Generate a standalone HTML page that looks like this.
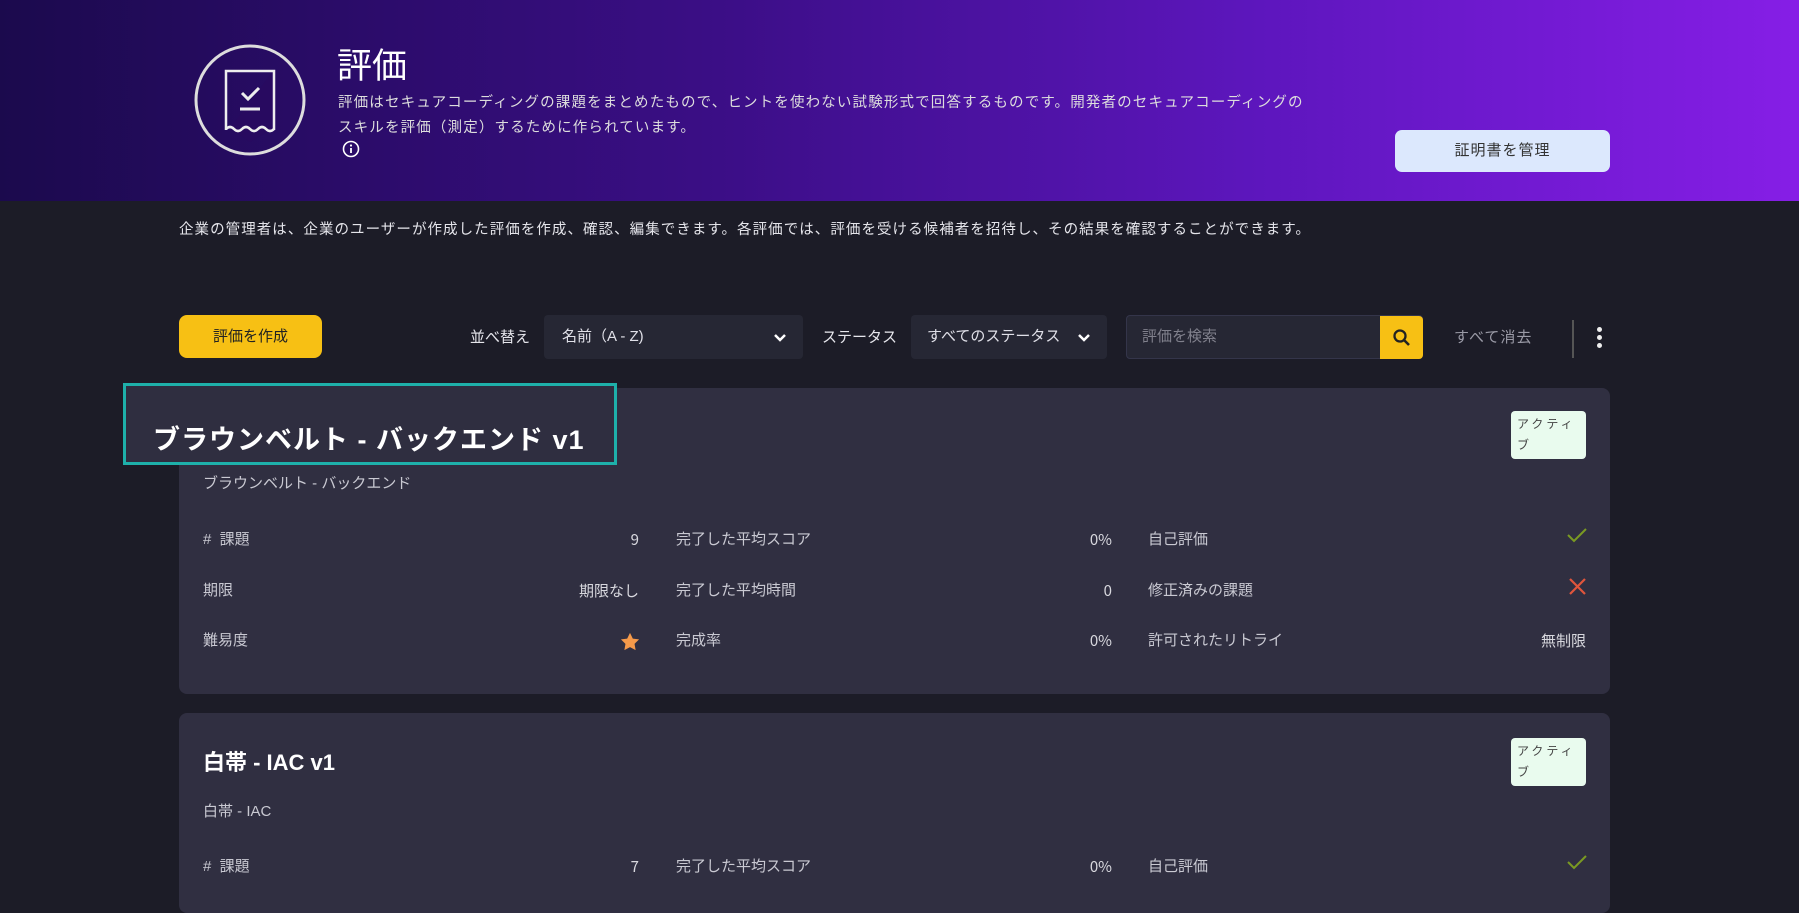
<!DOCTYPE html>
<html><head><meta charset="utf-8">
<style>
*{margin:0;padding:0;box-sizing:border-box}
body{width:1799px;height:887px;overflow:hidden;background:#1c1c27;font-family:"Liberation Sans","Noto Sans CJK JP",sans-serif;color:#e6e6ec;position:relative}
.a{position:absolute;white-space:nowrap}
.hdr{position:absolute;left:0;top:0;width:1799px;height:201px;background:linear-gradient(90deg,#1b0a4d 0%,#3b0e86 40%,#5d16bd 70%,#861ee6 100%)}
.card{position:absolute;left:179px;width:1431px;background:#302f41;border-radius:8px}
.lbl{font-size:15px;color:#c9c9d2;line-height:22px}
.val{font-size:15px;color:#d8d8de;text-align:right;line-height:22px;font-family:"Noto Sans CJK JP",sans-serif}
.badge{position:absolute;left:1332px;width:75px;height:48px;background:#e9fbee;border-radius:4px;font-size:12px;color:#444;padding:3px 6px;line-height:21px;white-space:normal;letter-spacing:3px;word-break:break-all}
.sel{position:absolute;top:315px;height:44px;background:#262734;border-radius:4px;font-size:15px;color:#e0e0e8;padding:0 18px;line-height:44px}
</style></head><body>
<div class="hdr"></div>
<svg class="a" style="left:190px;top:40px" width="120" height="120" viewBox="0 0 120 120">
<circle cx="60" cy="60" r="54" fill="none" stroke="#ddd" stroke-width="3"/>
<path d="M84 30 L84 88 L60 102 L40 88Z" fill="#2a0a60" opacity="0.7"/>
<path d="M36 90 V31 H84 V90" fill="none" stroke="#eee" stroke-width="2.5"/>
<path d="M36 89 q4 -4 8 0 t8 0 t8 0 t8 0 t8 0 t8 0" fill="none" stroke="#eee" stroke-width="2.5"/>
<path d="M52 53 l6 6 l11 -11" fill="none" stroke="#eee" stroke-width="3"/>
<path d="M50 69 H70" stroke="#eee" stroke-width="3"/>
</svg>
<div class="a" style="left:337px;top:38px;font-size:35px;color:#fff">評価</div>
<div class="a" style="left:338px;top:91px;font-size:14.5px;letter-spacing:1.15px;color:#ddd;line-height:25px">評価はセキュアコーディングの課題をまとめたもので、ヒントを使わない試験形式で回答するものです。開発者のセキュアコーディングの<br>スキルを評価（測定）するために作られています。</div>
<svg class="a" style="left:342px;top:140px" width="18" height="18" viewBox="0 0 18 18"><circle cx="9" cy="9" r="7.5" fill="none" stroke="#fff" stroke-width="1.6"/><path d="M9 8v5" stroke="#fff" stroke-width="1.8"/><circle cx="9" cy="5.5" r="1.1" fill="#fff"/></svg>
<div class="a" style="left:1395px;top:130px;width:215px;height:42px;background:#dce8fd;border-radius:7px;color:#333;font-size:15px;text-align:center;line-height:42px;letter-spacing:1px">証明書を管理</div>
<div class="a" style="left:179px;top:218px;font-size:14.5px;letter-spacing:1.05px;color:#e4e4ea">企業の管理者は、企業のユーザーが作成した評価を作成、確認、編集できます。各評価では、評価を受ける候補者を招待し、その結果を確認することができます。</div>
<div class="a" style="left:179px;top:315px;width:143px;height:43px;background:#f7c014;border-radius:8px;color:#222;font-size:15px;text-align:center;line-height:43px">評価を作成</div>
<div class="a" style="left:470px;top:326px;font-size:15px">並べ替え</div>
<div class="sel" style="left:544px;width:259px">名前（A - Z)</div>
<div class="a" style="left:822px;top:326px;font-size:15px">ステータス</div>
<div class="sel" style="left:911px;width:196px;padding-left:16px">すべてのステータス</div>
<svg class="a" style="left:1077px;top:332px" width="14" height="12" viewBox="0 0 14 12"><path d="M2 3l5 5 5-5" fill="none" stroke="#fff" stroke-width="2.5"/></svg>
<svg class="a" style="left:773px;top:332px" width="14" height="12" viewBox="0 0 14 12"><path d="M2 3l5 5 5-5" fill="none" stroke="#fff" stroke-width="2.5"/></svg>
<div class="a" style="left:1126px;top:315px;width:297px;height:44px;background:#262734;border:1px solid #34354a;border-radius:4px;font-size:15px;color:#80808c;line-height:42px;padding-left:15px">評価を検索</div>
<div class="a" style="left:1380px;top:316px;width:43px;height:43px;background:#f7c014;border-radius:0 4px 4px 0"></div>
<svg class="a" style="left:1391px;top:327px" width="22" height="22" viewBox="0 0 22 22"><circle cx="9" cy="9" r="5.5" fill="none" stroke="#222" stroke-width="2.3"/><path d="M13 13l5 5" stroke="#222" stroke-width="2.6"/></svg>
<div class="a" style="left:1454px;top:326px;font-size:15px;color:#9a9aa6;letter-spacing:1px">すべて消去</div>
<div class="a" style="left:1572px;top:320px;width:2px;height:38px;background:#555"></div>
<div class="a" style="left:1597px;top:327px;width:5px;height:5px;border-radius:50%;background:#eee"></div>
<div class="a" style="left:1597px;top:335px;width:5px;height:5px;border-radius:50%;background:#eee"></div>
<div class="a" style="left:1597px;top:343px;width:5px;height:5px;border-radius:50%;background:#eee"></div>

<div class="card" style="top:388px;height:306px"></div>
<div class="a" style="left:123px;top:383px;width:494px;height:82px;border:3px solid #1eb0aa;background:#2f2e40"></div>
<div class="a" style="left:153px;top:418px;font-size:27px;letter-spacing:1px;font-weight:bold;color:#fff">ブラウンベルト - バックエンド v1</div>
<div class="badge" style="top:411px;left:1511px">アクティブ</div>
<div class="a lbl" style="left:203px;top:473px">ブラウンベルト - バックエンド</div>

<div class="a lbl" style="left:203px;top:529px"># &nbsp;課題</div>
<div class="a val" style="left:539px;width:100px;top:529px">9</div>
<div class="a lbl" style="left:676px;top:529px">完了した平均スコア</div>
<div class="a val" style="left:1012px;width:100px;top:529px">0%</div>
<div class="a lbl" style="left:1148px;top:529px">自己評価</div>
<svg class="a" style="left:1566px;top:526px" width="22" height="18" viewBox="0 0 22 18"><path d="M2 9l6 6L20 3" fill="none" stroke="#7a9a22" stroke-width="2"/></svg>

<div class="a lbl" style="left:203px;top:580px">期限</div>
<div class="a val" style="left:539px;width:100px;top:580px">期限なし</div>
<div class="a lbl" style="left:676px;top:580px">完了した平均時間</div>
<div class="a val" style="left:1012px;width:100px;top:580px">0</div>
<div class="a lbl" style="left:1148px;top:580px">修正済みの課題</div>
<svg class="a" style="left:1568px;top:577px" width="19" height="19" viewBox="0 0 19 19"><path d="M2 2l15 15M17 2L2 17" stroke="#e0553c" stroke-width="2.2"/></svg>

<div class="a lbl" style="left:203px;top:630px">難易度</div>
<svg class="a" style="left:620px;top:632px" width="20" height="19" viewBox="0 0 24 23"><path d="M12 1l3.4 7 7.6 1-5.5 5.3 1.3 7.6L12 18.3 5.2 21.9l1.3-7.6L1 9l7.6-1z" fill="#f59a4a"/></svg>
<div class="a lbl" style="left:676px;top:630px">完成率</div>
<div class="a val" style="left:1012px;width:100px;top:630px">0%</div>
<div class="a lbl" style="left:1148px;top:630px">許可されたリトライ</div>
<div class="a val" style="left:1486px;width:100px;top:630px">無制限</div>

<div class="card" style="top:713px;height:200px"></div>
<div class="a" style="left:203px;top:745px;font-size:22px;font-weight:bold;color:#fff">白帯 - IAC v1</div>
<div class="badge" style="top:738px;left:1511px">アクティブ</div>
<div class="a lbl" style="left:203px;top:801px">白帯 - IAC</div>
<div class="a lbl" style="left:203px;top:856px"># &nbsp;課題</div>
<div class="a val" style="left:539px;width:100px;top:856px">7</div>
<div class="a lbl" style="left:676px;top:856px">完了した平均スコア</div>
<div class="a val" style="left:1012px;width:100px;top:856px">0%</div>
<div class="a lbl" style="left:1148px;top:856px">自己評価</div>
<svg class="a" style="left:1566px;top:853px" width="22" height="18" viewBox="0 0 22 18"><path d="M2 9l6 6L20 3" fill="none" stroke="#7a9a22" stroke-width="2"/></svg>
</body></html>
